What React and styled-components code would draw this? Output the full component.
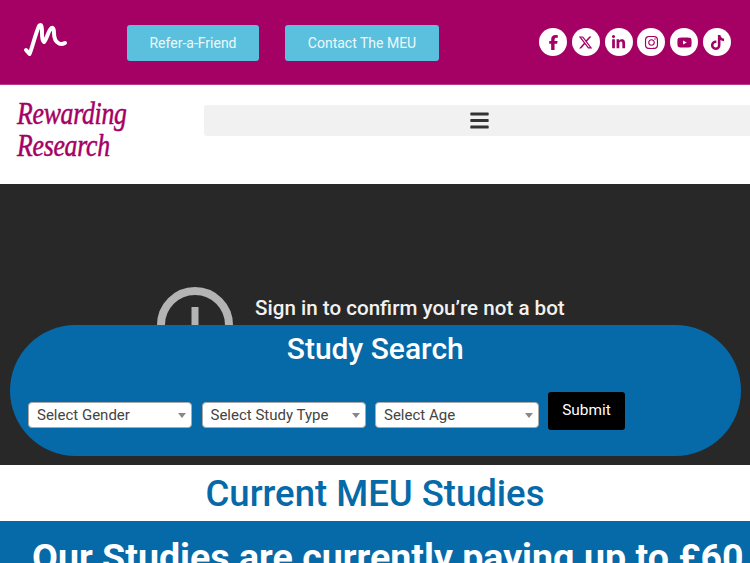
import React from "react";
import styled, { createGlobalStyle } from "styled-components";
import { FaFacebookF, FaXTwitter, FaLinkedinIn, FaInstagram, FaYoutube, FaTiktok } from "react-icons/fa6";
import { FaBars } from "react-icons/fa";

const Global = createGlobalStyle`
  html, body { margin: 0; padding: 0; background: #fff; overflow: hidden; }
  body { font-family: Roboto, "Liberation Sans", sans-serif; width: 750px; height: 563px; }
  * { box-sizing: border-box; }
`;

const Page = styled.div`
  width: 750px;
  height: 563px;
  overflow: hidden;
`;

const TopBar = styled.header`
  height: 85px;
  background: #a50064;
  border-bottom: 1px solid #b73a85;
  display: flex;
  align-items: flex-start;
  padding: 25px 19px 0 21px;
`;

const Mark = styled.svg`
  width: 48px;
  height: 40px;
  margin-top: -4px;
  margin-right: 58px;
  flex: none;
`;

const CtaGroup = styled.div`
  display: flex;
  gap: 26px;
`;

const Cta = styled.a`
  display: flex;
  align-items: center;
  justify-content: center;
  height: 36px;
  width: ${(p) => p.$w}px;
  background: #5bc0de;
  border-radius: 3px;
  color: #eef8fb;
  font-size: 14px;
`;

const Socials = styled.div`
  margin-left: auto;
  margin-top: 3px;
  display: flex;
  gap: 4.8px;
`;

const Social = styled.a`
  width: 28px;
  height: 28px;
  border-radius: 50%;
  background: #fff;
  color: #a50064;
  display: flex;
  align-items: center;
  justify-content: center;
  font-size: 15px;
`;

const NavRow = styled.div`
  height: 99px;
  background: #fff;
  display: flex;
  align-items: flex-start;
  padding: 20px 0 0 17px;
`;

const Wordmark = styled.div`
  width: 187px;
  flex: none;
  margin-top: -7px;
  color: #a50064;
  font-family: "Liberation Serif", serif;
  font-style: italic;
  font-size: 31px;
  line-height: 32px;
  letter-spacing: -0.3px;
  -webkit-text-stroke: 0.5px #a50064;
  transform: scaleX(0.83);
  transform-origin: left top;
`;

const MenuBar = styled.div`
  flex: 1;
  height: 31px;
  background: #f1f1f1;
  border-radius: 3px 0 0 3px;
  display: flex;
  align-items: center;
  justify-content: center;
  padding-left: 4px;
  color: #333;
  font-size: 21px;
`;

const Video = styled.section`
  position: relative;
  height: 281px;
  background: #282828;
  display: flex;
  align-items: flex-start;
  gap: 22px;
  padding: 103px 0 0 157px;
`;

const Alert = styled.svg`
  width: 76px;
  height: 76px;
  flex: none;
`;

const VideoText = styled.div`
  color: #f1f1f1;
  font-size: 20.6px;
  font-weight: 500;
  line-height: 28px;
  margin-top: 7px;
`;

const Search = styled.form`
  position: absolute;
  left: 9.5px;
  top: 141px;
  width: 731.5px;
  height: 131px;
  border-radius: 66px;
  background: #0669a8;
  padding: 5px 18.5px 0;
`;

const SearchTitle = styled.h2`
  margin: 0 0 24px;
  text-align: center;
  color: #fff;
  font-size: 30px;
  font-weight: 500;
  line-height: 38px;
`;

const Fields = styled.div`
  display: flex;
  align-items: flex-end;
  gap: 9.5px;
`;

const SelectWrap = styled.div`
  position: relative;
  width: 164px;
  height: 26px;
  margin-bottom: 2px;
  &::after {
    content: "";
    position: absolute;
    right: 6px;
    top: 11px;
    border-left: 4px solid transparent;
    border-right: 4px solid transparent;
    border-top: 5px solid #888;
    pointer-events: none;
  }
`;

const Select = styled.select`
  appearance: none;
  width: 100%;
  height: 100%;
  background: #fff;
  border: 1px solid #aaa;
  border-radius: 4px;
  padding: 0 20px 0 8px;
  color: #444;
  font-family: Roboto, sans-serif;
  font-size: 15px;
`;

const Submit = styled.button`
  width: 77px;
  height: 38px;
  margin-left: -0.5px;
  border: none;
  border-radius: 3px;
  background: #000;
  color: #fff;
  font-family: Roboto, sans-serif;
  font-size: 15.4px;
  padding: 0 0 2px;
`;

const Heading = styled.h2`
  margin: 0;
  height: 56px;
  background: #fff;
  text-align: center;
  color: #0669a8;
  font-size: 36.5px;
  font-weight: 500;
  line-height: 57px;
`;

const Band = styled.div`
  height: 60px;
  background: #0669a8;
  color: #fff;
  font-size: 37.6px;
  font-weight: 700;
  line-height: 44px;
  padding: 14px 0 0 32px;
  white-space: nowrap;
`;

const socials = [FaFacebookF, FaXTwitter, FaLinkedinIn, FaInstagram, FaYoutube, FaTiktok];
const options = ["Select Gender", "Select Study Type", "Select Age"];

export default function App() {
  return (
    <Page>
      <Global />
      <TopBar>
        <Mark viewBox="0 0 48 40" fill="none" aria-hidden="true">
          <path
            d="M5 29 L8.5 33 C11 28 14 14 18 5 C19.5 3 21 4 21 9 C21 14 20.5 19 23 21 C26 18 27 10 30.5 7 C32 6 33 8 33 12 C33 17 35 21 38 22.5 C40 23.5 42 23 44 22"
            stroke="#fff"
            strokeWidth="4"
            strokeLinecap="round"
            strokeLinejoin="round"
          />
        </Mark>
        <CtaGroup>
          <Cta $w={132}>Refer-a-Friend</Cta>
          <Cta $w={154}>Contact The MEU</Cta>
        </CtaGroup>
        <Socials>
          {socials.map((Icon, i) => (
            <Social key={i}>
              <Icon />
            </Social>
          ))}
        </Socials>
      </TopBar>
      <NavRow>
        <Wordmark>
          Rewarding
          <br />
          Research
        </Wordmark>
        <MenuBar>
          <FaBars />
        </MenuBar>
      </NavRow>
      <Video>
        <Alert viewBox="0 0 76 76" fill="none" aria-hidden="true">
          <circle cx="38" cy="38" r="34" stroke="#b4b4b4" strokeWidth="8" />
          <rect x="34.5" y="20" width="7" height="28" fill="#b4b4b4" />
        </Alert>
        <VideoText>Sign in to confirm you’re not a bot</VideoText>
        <Search>
          <SearchTitle>Study Search</SearchTitle>
          <Fields>
            {options.map((o) => (
              <SelectWrap key={o}>
                <Select defaultValue={o}>
                  <option>{o}</option>
                </Select>
              </SelectWrap>
            ))}
            <Submit type="button">Submit</Submit>
          </Fields>
        </Search>
      </Video>
      <Heading>Current MEU Studies</Heading>
      <Band>Our Studies are currently paying up to £60</Band>
    </Page>
  );
}
